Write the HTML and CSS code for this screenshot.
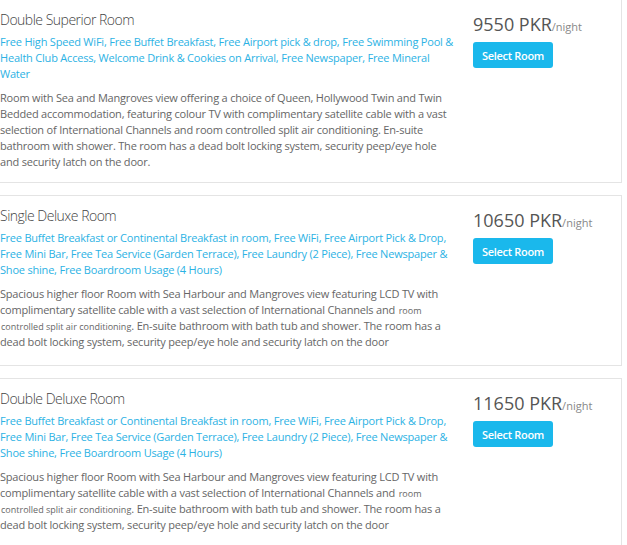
FILE: index.html
```html
<!DOCTYPE html>
<html>
<head>
<meta charset="utf-8">
<link rel="stylesheet" href="styles.css">
</head>
<body>
<div class="rooms">
  <div class="room">
    <div class="info">
      <h3 class="title">Double Superior Room</h3>
      <p class="amenities">Free High Speed WiFi, Free Buffet Breakfast, Free Airport pick &amp; drop, Free Swimming Pool &amp; Health Club Access, Welcome Drink &amp; Cookies on Arrival, Free Newspaper, Free Mineral Water</p>
      <p class="desc">Room with Sea and Mangroves view offering a choice of Queen, Hollywood Twin and Twin Bedded accommodation, featuring colour TV with complimentary satellite cable with a vast selection of International Channels and room controlled split air conditioning. En-suite bathroom with shower. The room has a dead bolt locking system, security peep/eye hole and security latch on the door.</p>
    </div>
    <div class="book">
      <div class="price">9550 PKR<span class="per">/night</span></div>
      <button class="select">Select Room</button>
    </div>
  </div>
  <div class="room">
    <div class="info">
      <h3 class="title">Single Deluxe Room</h3>
      <p class="amenities">Free Buffet Breakfast or Continental Breakfast in room, Free WiFi, Free Airport Pick &amp; Drop, Free Mini Bar, Free Tea Service (Garden Terrace), Free Laundry (2 Piece), Free Newspaper &amp; Shoe shine, Free Boardroom Usage (4 Hours)</p>
      <p class="desc"><span>Spacious higher floor Room with Sea Harbour and Mangroves view featuring LCD TV with </span><span>complimentary satellite cable with a vast selection of International Channels and </span><small class="fine">room </small><small class="fine">controlled split air conditioning</small><span>. En-suite bathroom with bath tub and shower. The room has a </span><span>dead bolt locking system, security peep/eye hole and security latch on the door</span></p>
    </div>
    <div class="book">
      <div class="price">10650 PKR<span class="per">/night</span></div>
      <button class="select">Select Room</button>
    </div>
  </div>
  <div class="room">
    <div class="info">
      <h3 class="title">Double Deluxe Room</h3>
      <p class="amenities">Free Buffet Breakfast or Continental Breakfast in room, Free WiFi, Free Airport Pick &amp; Drop, Free Mini Bar, Free Tea Service (Garden Terrace), Free Laundry (2 Piece), Free Newspaper &amp; Shoe shine, Free Boardroom Usage (4 Hours)</p>
      <p class="desc"><span>Spacious higher floor Room with Sea Harbour and Mangroves view featuring LCD TV with </span><span>complimentary satellite cable with a vast selection of International Channels and </span><small class="fine">room </small><small class="fine">controlled split air conditioning</small><span>. En-suite bathroom with bath tub and shower. The room has a </span><span>dead bolt locking system, security peep/eye hole and security latch on the door</span></p>
    </div>
    <div class="book">
      <div class="price">11650 PKR<span class="per">/night</span></div>
      <button class="select">Select Room</button>
    </div>
  </div>
</div>
</body>
</html>
```

FILE: styles.css
```css
html, body {
  margin: 0;
  padding: 0;
  background: #fff;
}
body {
  font-family: "Open Sans", "Liberation Sans", sans-serif;
  color: #666;
  overflow: hidden;
}
.rooms {
  width: 622px;
  margin-top: -1px;
  display: flex;
  flex-direction: column;
  gap: 12px;
}
.room {
  display: flex;
  border: 1px solid #e4e4e4;
  border-left: none;
  padding: 10px 0 12px 0;
}
.room + .room {
  padding-bottom: 15px;
}
.info {
  width: 455px;
  flex: none;
}
.title {
  margin: 0;
  font-size: 14px;
  font-weight: 300;
  line-height: 20px;
  color: #444;
  letter-spacing: -0.5px;
}
.amenities {
  margin: 4px 0 8px;
  font-size: 11px;
  line-height: 16px;
  color: #2cb2e4;
  letter-spacing: -0.2px;
}
.desc {
  margin: 0;
  font-size: 11px;
  line-height: 16px;
  color: #666;
  letter-spacing: -0.2px;
}
.fine {
  font-size: 9px;
  line-height: 12px;
  letter-spacing: 0;
  margin-left: 1px;
}
.book {
  padding-left: 18px;
}
.price {
  font-size: 18px;
  line-height: 24px;
  color: #555;
  margin-top: 2px;
}
.per {
  font-size: 11px;
  color: #888;
}
.select {
  margin-top: 3px;
  width: 80px;
  height: 26px;
  border: none;
  border-radius: 3px;
  background: #1ab8ec;
  color: #fff;
  font-family: "Open Sans", "Liberation Sans", sans-serif;
  font-size: 11px;
  font-weight: 600;
  padding: 0;
  letter-spacing: -0.3px;
}
```
